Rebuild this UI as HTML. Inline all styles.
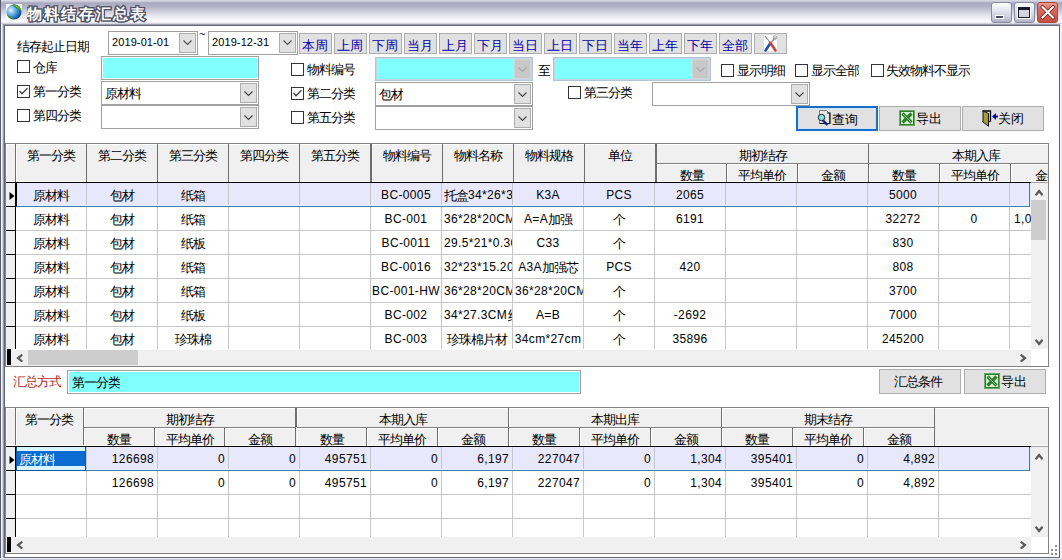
<!DOCTYPE html><html><head><meta charset="utf-8"><style>
html,body{margin:0;padding:0;}
body{width:1062px;height:560px;position:relative;overflow:hidden;background:#fff;font-family:"Liberation Sans",sans-serif;font-size:12px;color:#000;}
div{position:absolute;box-sizing:border-box;}
.t{white-space:nowrap;line-height:14px;height:14px;overflow:hidden;letter-spacing:0.35px;}
.c{font-size:13px;letter-spacing:-1px;position:relative;top:1px;}
.btn{background:#e1e1e1;border:1px solid #adadad;}
.cb{width:13px;height:13px;border:1px solid #333;background:#fff;}
.combo{background:#fff;border:1px solid #a0a0a0;}
.dd{background:#e5e5e5;border:1px solid #b4b4b4;}
</style></head><body>
<div style="left:0px;top:0px;width:1062px;height:26px;background:linear-gradient(#dcdce6 0px,#c8c8d8 1.5px,#a8a8c0 3px,#b4b4ca 7px,#cacad9 11px,#e2e2eb 15px,#f4f4f8 19px,#fbfbfd 22px,#d4d4e0 23.5px,#a8a8ba 24.4px,#66667c 25px,#66667c 26px);"></div>
<div style="left:0px;top:0px;width:1px;height:560px;background:#5c5c70;"></div>
<div style="left:1px;top:24px;width:1px;height:536px;background:#f6f6fa;"></div>
<div style="left:2px;top:24px;width:1px;height:536px;background:#d4d4de;"></div>
<div style="left:3px;top:24px;width:1px;height:536px;background:#9c9cac;"></div>
<div style="left:4px;top:25px;width:1px;height:533px;background:#62627a;"></div>
<div style="left:1059px;top:25px;width:1px;height:533px;background:#62627a;"></div>
<div style="left:1060px;top:24px;width:2px;height:536px;background:#f0f0f6;"></div>
<div style="left:5px;top:557px;width:1055px;height:1px;background:#62627a;"></div>
<div style="left:0px;top:558px;width:1062px;height:2px;background:#f0f0f6;"></div>
<div style="left:0px;top:559px;width:1062px;height:1px;background:#c8c8d4;"></div>
<svg style="position:absolute;left:6px;top:4px" width="16" height="16" viewBox="0 0 16 16">
<defs><radialGradient id="gl" cx="0.3" cy="0.38" r="0.8"><stop offset="0" stop-color="#e0f4ff"/><stop offset="0.35" stop-color="#6ab4e8"/><stop offset="0.75" stop-color="#1a64b0"/><stop offset="1" stop-color="#0a3060"/></radialGradient>
<clipPath id="gc"><circle cx="8" cy="8" r="7.6"/></clipPath></defs>
<rect width="16" height="16" fill="#f8f8fa"/>
<circle cx="8" cy="8" r="7.6" fill="url(#gl)"/>
<g clip-path="url(#gc)">
<ellipse cx="12.5" cy="1.5" rx="8" ry="3.6" transform="rotate(32 12.5 1.5)" fill="#3d8a22"/>
<ellipse cx="11.8" cy="2.6" rx="6.5" ry="1.6" transform="rotate(32 11.8 2.6)" fill="#5aa83a"/>
<ellipse cx="2.5" cy="15" rx="7" ry="3" transform="rotate(32 2.5 15)" fill="#3d8a22"/>
</g>
</svg>
<div class="t" style="left:27px;top:4px;font-size:15px;line-height:20px;height:22px;font-weight:bold;color:#505066;letter-spacing:2.2px;-webkit-text-stroke:2.4px #505066;text-shadow:1px 0px 0 #505066,-1px 0px 0 #505066,0px 1px 0 #505066,0px -1px 0 #505066,1px 1px 0 #505066,-1px -1px 0 #505066,1px -1px 0 #505066,-1px 1px 0 #505066;">物料结存汇总表</div>
<div class="t" style="left:27px;top:4px;font-size:15px;line-height:20px;height:22px;font-weight:bold;color:#fff;letter-spacing:2.2px;">物料结存汇总表</div>
<div style="left:991px;top:2px;width:21px;height:21px;background:linear-gradient(#fdfdff,#e4e4ee 40%,#c8c8d8 80%,#b0b0c4);border:1px solid #8a8aa0;border-radius:3px;"></div>
<div style="left:1014px;top:2px;width:21px;height:21px;background:linear-gradient(#fdfdff,#e4e4ee 40%,#c8c8d8 80%,#b0b0c4);border:1px solid #8a8aa0;border-radius:3px;"></div>
<div style="left:1037px;top:2px;width:21px;height:21px;background:linear-gradient(#eea090,#de6a5c 30%,#d45a4c 70%,#c85040);border:1px solid #a84838;border-radius:3px;"></div>
<div style="left:995px;top:15px;width:9px;height:4px;background:#4a4a64;border:1px solid #fff;"></div>
<div style="left:1018px;top:7px;width:12px;height:11px;border:1px solid #1a1a2a;border-top:3px solid #1a1a2a;background:#d4d4e0;outline:1px solid #fff;"></div>
<svg style="position:absolute;left:1037px;top:2px" width="21" height="21" viewBox="0 0 21 21"><path d="M5.5 5 L16 15.5 M16 5 L5.5 15.5" stroke="#5a1010" stroke-width="3.4" stroke-linecap="square"/><path d="M5.5 5 L16 15.5 M16 5 L5.5 15.5" stroke="#fff" stroke-width="2.2" stroke-linecap="square"/></svg>
<div class="t" style="left:17px;top:39px;"><span class="c">结存起止日期</span></div>
<div style="left:108px;top:31px;width:90px;height:24px;background:#fff;border:1px solid #a0a0a0;"></div>
<div style="left:179px;top:33px;width:17px;height:20px;background:#e1e1e1;border:1px solid #acacac;"></div>
<svg style="position:absolute;left:183px;top:40px" width="9" height="6" viewBox="0 0 9 6"><path d="M0.5 0.5 L4.5 4.5 L8.5 0.5" fill="none" stroke="#505050" stroke-width="1.1"/></svg>
<div class="t" style="left:112px;top:35px;font-size:11px;letter-spacing:0.1px;">2019-01-01</div>
<div style="left:208px;top:31px;width:90px;height:24px;background:#fff;border:1px solid #a0a0a0;"></div>
<div style="left:279px;top:33px;width:17px;height:20px;background:#e1e1e1;border:1px solid #acacac;"></div>
<svg style="position:absolute;left:283px;top:40px" width="9" height="6" viewBox="0 0 9 6"><path d="M0.5 0.5 L4.5 4.5 L8.5 0.5" fill="none" stroke="#505050" stroke-width="1.1"/></svg>
<div class="t" style="left:212px;top:35px;font-size:11px;letter-spacing:0.1px;">2019-12-31</div>
<div class="t" style="left:199px;top:27px;font-size:11px;">~</div>
<div class="btn" style="left:299px;top:33px;width:33px;height:21px;"></div>
<div class="t" style="left:299px;top:39px;width:33px;text-align:center;font-size:13px;color:#0000a8;line-height:14px;height:15px;">本周</div>
<div class="btn" style="left:334px;top:33px;width:33px;height:21px;"></div>
<div class="t" style="left:334px;top:39px;width:33px;text-align:center;font-size:13px;color:#0000a8;line-height:14px;height:15px;">上周</div>
<div class="btn" style="left:369px;top:33px;width:33px;height:21px;"></div>
<div class="t" style="left:369px;top:39px;width:33px;text-align:center;font-size:13px;color:#0000a8;line-height:14px;height:15px;">下周</div>
<div class="btn" style="left:404px;top:33px;width:33px;height:21px;"></div>
<div class="t" style="left:404px;top:39px;width:33px;text-align:center;font-size:13px;color:#0000a8;line-height:14px;height:15px;">当月</div>
<div class="btn" style="left:439px;top:33px;width:33px;height:21px;"></div>
<div class="t" style="left:439px;top:39px;width:33px;text-align:center;font-size:13px;color:#0000a8;line-height:14px;height:15px;">上月</div>
<div class="btn" style="left:474px;top:33px;width:33px;height:21px;"></div>
<div class="t" style="left:474px;top:39px;width:33px;text-align:center;font-size:13px;color:#0000a8;line-height:14px;height:15px;">下月</div>
<div class="btn" style="left:509px;top:33px;width:33px;height:21px;"></div>
<div class="t" style="left:509px;top:39px;width:33px;text-align:center;font-size:13px;color:#0000a8;line-height:14px;height:15px;">当日</div>
<div class="btn" style="left:544px;top:33px;width:33px;height:21px;"></div>
<div class="t" style="left:544px;top:39px;width:33px;text-align:center;font-size:13px;color:#0000a8;line-height:14px;height:15px;">上日</div>
<div class="btn" style="left:579px;top:33px;width:33px;height:21px;"></div>
<div class="t" style="left:579px;top:39px;width:33px;text-align:center;font-size:13px;color:#0000a8;line-height:14px;height:15px;">下日</div>
<div class="btn" style="left:614px;top:33px;width:33px;height:21px;"></div>
<div class="t" style="left:614px;top:39px;width:33px;text-align:center;font-size:13px;color:#0000a8;line-height:14px;height:15px;">当年</div>
<div class="btn" style="left:649px;top:33px;width:33px;height:21px;"></div>
<div class="t" style="left:649px;top:39px;width:33px;text-align:center;font-size:13px;color:#0000a8;line-height:14px;height:15px;">上年</div>
<div class="btn" style="left:684px;top:33px;width:33px;height:21px;"></div>
<div class="t" style="left:684px;top:39px;width:33px;text-align:center;font-size:13px;color:#0000a8;line-height:14px;height:15px;">下年</div>
<div class="btn" style="left:719px;top:33px;width:33px;height:21px;"></div>
<div class="t" style="left:719px;top:39px;width:33px;text-align:center;font-size:13px;color:#0000a8;line-height:14px;height:15px;">全部</div>
<div class="btn" style="left:754px;top:33px;width:33px;height:21px;"></div>
<svg style="position:absolute;left:763px;top:35px" width="15" height="17" viewBox="0 0 15 17">
<rect x="1" y="0" width="13" height="16" fill="#fff"/>
<path d="M2 1 L7.5 8" stroke="#888" stroke-width="1.2"/>
<path d="M7.5 8 L2.5 15.5" stroke="#1f4fb0" stroke-width="2.6" stroke-linecap="round"/>
<path d="M12.5 2.5 L7.5 8" stroke="#999" stroke-width="1.6"/>
<circle cx="12" cy="2.5" r="1.8" fill="none" stroke="#999" stroke-width="1"/>
<path d="M7.5 8 L12.5 15.5" stroke="#d04040" stroke-width="2.6" stroke-linecap="round"/>
</svg>
<div class="cb" style="left:17px;top:60px;width:13px;height:13px;"></div>
<div class="t" style="left:33px;top:60px;"><span class="c">仓库</span></div>
<div style="left:101px;top:56px;width:158px;height:24px;background:#80ffff;border:1px solid #a0a0a0;box-shadow:inset 0 0 0 1px #fff;"></div>
<div class="cb" style="left:17px;top:85px;width:13px;height:13px;"></div>
<svg style="position:absolute;left:17px;top:85px" width="13" height="13" viewBox="0 0 13 13"><path d="M2.5 6 L5 8.8 L10.5 3.2" fill="none" stroke="#444" stroke-width="1.3"/></svg>
<div class="t" style="left:33px;top:84px;"><span class="c">第一分类</span></div>
<div style="left:101px;top:81px;width:158px;height:24px;background:#fff;border:1px solid #a0a0a0;"></div>
<div style="left:240px;top:83px;width:17px;height:20px;background:#e1e1e1;border:1px solid #acacac;"></div>
<svg style="position:absolute;left:244px;top:91px" width="9" height="6" viewBox="0 0 9 6"><path d="M0.5 0.5 L4.5 4.5 L8.5 0.5" fill="none" stroke="#444" stroke-width="1.1"/></svg>
<div class="t" style="left:105px;top:86px;"><span class="c">原材料</span></div>
<div class="cb" style="left:17px;top:109px;width:13px;height:13px;"></div>
<div class="t" style="left:33px;top:108px;"><span class="c">第四分类</span></div>
<div style="left:101px;top:105px;width:158px;height:24px;background:#fff;border:1px solid #a0a0a0;"></div>
<div style="left:240px;top:107px;width:17px;height:20px;background:#e1e1e1;border:1px solid #acacac;"></div>
<svg style="position:absolute;left:244px;top:115px" width="9" height="6" viewBox="0 0 9 6"><path d="M0.5 0.5 L4.5 4.5 L8.5 0.5" fill="none" stroke="#444" stroke-width="1.1"/></svg>
<div class="cb" style="left:291px;top:63px;width:13px;height:13px;"></div>
<div class="t" style="left:307px;top:62px;"><span class="c">物料编号</span></div>
<div style="left:375px;top:57px;width:158px;height:24px;background:#80ffff;border:1px solid #b4c4d8;box-shadow:inset 0 0 0 1px #c8d4e4;"></div>
<div style="left:514px;top:59px;width:17px;height:20px;background:#c8c8c8;border:1px solid #d4d4d4;"></div>
<svg style="position:absolute;left:518px;top:67px" width="9" height="6" viewBox="0 0 9 6"><path d="M0.5 0.5 L4.5 4.5 L8.5 0.5" fill="none" stroke="#a8a8a8" stroke-width="1.1"/></svg>
<div class="t" style="left:538px;top:63px;"><span class="c">至</span></div>
<div style="left:553px;top:57px;width:158px;height:24px;background:#80ffff;border:1px solid #b4c4d8;box-shadow:inset 0 0 0 1px #c8d4e4;"></div>
<div style="left:692px;top:59px;width:17px;height:20px;background:#c8c8c8;border:1px solid #d4d4d4;"></div>
<svg style="position:absolute;left:696px;top:67px" width="9" height="6" viewBox="0 0 9 6"><path d="M0.5 0.5 L4.5 4.5 L8.5 0.5" fill="none" stroke="#a8a8a8" stroke-width="1.1"/></svg>
<div class="cb" style="left:291px;top:87px;width:13px;height:13px;"></div>
<svg style="position:absolute;left:291px;top:87px" width="13" height="13" viewBox="0 0 13 13"><path d="M2.5 6 L5 8.8 L10.5 3.2" fill="none" stroke="#444" stroke-width="1.3"/></svg>
<div class="t" style="left:307px;top:86px;"><span class="c">第二分类</span></div>
<div style="left:375px;top:82px;width:158px;height:24px;background:#fff;border:1px solid #a0a0a0;"></div>
<div style="left:514px;top:84px;width:17px;height:20px;background:#e1e1e1;border:1px solid #acacac;"></div>
<svg style="position:absolute;left:518px;top:92px" width="9" height="6" viewBox="0 0 9 6"><path d="M0.5 0.5 L4.5 4.5 L8.5 0.5" fill="none" stroke="#444" stroke-width="1.1"/></svg>
<div class="t" style="left:379px;top:87px;"><span class="c">包材</span></div>
<div class="cb" style="left:291px;top:111px;width:13px;height:13px;"></div>
<div class="t" style="left:307px;top:110px;"><span class="c">第五分类</span></div>
<div style="left:375px;top:106px;width:158px;height:24px;background:#fff;border:1px solid #a0a0a0;"></div>
<div style="left:514px;top:108px;width:17px;height:20px;background:#e1e1e1;border:1px solid #acacac;"></div>
<svg style="position:absolute;left:518px;top:116px" width="9" height="6" viewBox="0 0 9 6"><path d="M0.5 0.5 L4.5 4.5 L8.5 0.5" fill="none" stroke="#444" stroke-width="1.1"/></svg>
<div class="cb" style="left:568px;top:86px;width:13px;height:13px;"></div>
<div class="t" style="left:584px;top:85px;"><span class="c">第三分类</span></div>
<div style="left:652px;top:82px;width:158px;height:24px;background:#fff;border:1px solid #a0a0a0;"></div>
<div style="left:791px;top:84px;width:17px;height:20px;background:#e1e1e1;border:1px solid #acacac;"></div>
<svg style="position:absolute;left:795px;top:92px" width="9" height="6" viewBox="0 0 9 6"><path d="M0.5 0.5 L4.5 4.5 L8.5 0.5" fill="none" stroke="#444" stroke-width="1.1"/></svg>
<div class="cb" style="left:721px;top:64px;width:13px;height:13px;"></div>
<div class="t" style="left:737px;top:63px;"><span class="c">显示明细</span></div>
<div class="cb" style="left:795px;top:64px;width:13px;height:13px;"></div>
<div class="t" style="left:811px;top:63px;"><span class="c">显示全部</span></div>
<div class="cb" style="left:871px;top:64px;width:13px;height:13px;"></div>
<div class="t" style="left:886px;top:63px;"><span class="c">失效物料不显示</span></div>
<div style="left:796px;top:106px;width:82px;height:25px;background:#e1e1e1;border:2px solid #1a6ec8;box-shadow:inset 0 0 0 1px #cce4f7;"></div>
<svg style="position:absolute;left:817px;top:110px" width="16" height="16" viewBox="0 0 16 16">
<path d="M2.5 0.5 H9.5 L12.5 3.5 V13.5 H2.5 Z" fill="#e6e6e6" stroke="#808080" stroke-width="1"/>
<path d="M10 3 H13 V13.5 H2.5" fill="none" stroke="#111" stroke-width="1.2"/>
<path d="M5.5 10 L10.5 15" stroke="#0a1a90" stroke-width="2.4"/>
<circle cx="4.5" cy="7.5" r="3.2" fill="#88e0e8" stroke="#222" stroke-width="1"/>
</svg>
<div class="t" style="left:832px;top:113px;font-size:13px;line-height:14px;">查询</div>
<div class="btn" style="left:879px;top:106px;width:82px;height:25px;"></div>
<svg style="position:absolute;left:899px;top:110px" width="16" height="16" viewBox="0 0 16 16">
<rect x="0" y="0" width="16" height="16" fill="#2f7a2f"/>
<rect x="0.5" y="0.5" width="15" height="15" fill="none" stroke="#a8d8a8" stroke-width="1" stroke-dasharray="1 1"/>
<rect x="2" y="2" width="12" height="12" fill="#d4f6d4"/>
<path d="M3.5 3.5 L12.5 12.5 M12.5 3.5 L3.5 12.5" stroke="#2e7e2e" stroke-width="3.2"/>
<path d="M4 4 L12 12" stroke="#b8e8b8" stroke-width="0.7"/>
</svg>
<div class="t" style="left:916px;top:112px;font-size:13px;line-height:14px;">导出</div>
<div class="btn" style="left:962px;top:106px;width:82px;height:25px;"></div>
<svg style="position:absolute;left:982px;top:110px" width="17" height="17" viewBox="0 0 17 17">
<path d="M0.5 1 H8.5 V11.5" fill="none" stroke="#000" stroke-width="1.3"/>
<path d="M0 11.5 H8.5" stroke="#000" stroke-width="1.2"/>
<path d="M1 1 L6.5 3.5 V16.2 L1 12 Z" fill="#a89c30" stroke="#111" stroke-width="1"/>
<path d="M10 6.5 L14 3 V10 Z" fill="#0a0a9a"/>
<rect x="13.5" y="5.5" width="2.5" height="2" fill="#0a0a9a"/>
</svg>
<div class="t" style="left:998px;top:112px;font-size:13px;line-height:14px;">关闭</div>
<div style="left:5px;top:143px;width:1044px;height:224px;background:#fff;border:1px solid #828282;"></div>
<div style="left:0;top:0;width:1048px;height:560px;overflow:hidden;">
<div style="left:6px;top:144px;width:1042px;height:38px;background:#f0f0f0;"></div>
<div style="left:6px;top:144px;width:9px;height:38px;background:#f0f0f0;border-top:1px solid #fff;border-left:1px solid #fff;"></div>
<div style="left:6px;top:181px;width:1042px;height:1px;background:#fff;"></div>
<div style="left:15px;top:144px;width:1px;height:38px;background:#6e6e6e;"></div>
<div style="left:16px;top:144px;width:1px;height:38px;background:#fff;"></div>
<div style="left:16px;top:144px;width:70px;height:1px;background:#fff;"></div>
<div class="t" style="left:16px;top:148px;width:70px;text-align:center;"><span class="c">第一分类</span></div>
<div style="left:86px;top:144px;width:1px;height:38px;background:#6e6e6e;"></div>
<div style="left:87px;top:144px;width:70px;height:1px;background:#fff;"></div>
<div class="t" style="left:87px;top:148px;width:70px;text-align:center;"><span class="c">第二分类</span></div>
<div style="left:157px;top:144px;width:1px;height:38px;background:#6e6e6e;"></div>
<div style="left:158px;top:144px;width:70px;height:1px;background:#fff;"></div>
<div class="t" style="left:158px;top:148px;width:70px;text-align:center;"><span class="c">第三分类</span></div>
<div style="left:228px;top:144px;width:1px;height:38px;background:#6e6e6e;"></div>
<div style="left:229px;top:144px;width:70px;height:1px;background:#fff;"></div>
<div class="t" style="left:229px;top:148px;width:70px;text-align:center;"><span class="c">第四分类</span></div>
<div style="left:299px;top:144px;width:1px;height:38px;background:#6e6e6e;"></div>
<div style="left:300px;top:144px;width:70px;height:1px;background:#fff;"></div>
<div class="t" style="left:300px;top:148px;width:70px;text-align:center;"><span class="c">第五分类</span></div>
<div style="left:370px;top:144px;width:1px;height:38px;background:#6e6e6e;"></div>
<div style="left:372px;top:144px;width:70px;height:1px;background:#fff;"></div>
<div class="t" style="left:372px;top:148px;width:70px;text-align:center;"><span class="c">物料编号</span></div>
<div style="left:442px;top:144px;width:1px;height:38px;background:#6e6e6e;"></div>
<div style="left:443px;top:144px;width:70px;height:1px;background:#fff;"></div>
<div class="t" style="left:443px;top:148px;width:70px;text-align:center;"><span class="c">物料名称</span></div>
<div style="left:513px;top:144px;width:1px;height:38px;background:#6e6e6e;"></div>
<div style="left:514px;top:144px;width:70px;height:1px;background:#fff;"></div>
<div class="t" style="left:514px;top:148px;width:70px;text-align:center;"><span class="c">物料规格</span></div>
<div style="left:584px;top:144px;width:1px;height:38px;background:#6e6e6e;"></div>
<div style="left:585px;top:144px;width:70px;height:1px;background:#fff;"></div>
<div class="t" style="left:585px;top:148px;width:70px;text-align:center;"><span class="c">单位</span></div>
<div style="left:655px;top:144px;width:1px;height:38px;background:#6e6e6e;"></div>
<div style="left:371px;top:144px;width:1px;height:38px;background:#6e6e6e;"></div>
<div style="left:656px;top:144px;width:1px;height:38px;background:#6e6e6e;"></div>
<div style="left:657px;top:144px;width:211px;height:1px;background:#fff;"></div>
<div class="t" style="left:657px;top:148px;width:211px;text-align:center;"><span class="c">期初结存</span></div>
<div style="left:657px;top:163px;width:211px;height:1px;background:#808080;"></div>
<div style="left:657px;top:164px;width:211px;height:1px;background:#fff;"></div>
<div class="t" style="left:657px;top:168px;width:69px;text-align:center;height:13px;"><span class="c">数量</span></div>
<div style="left:726px;top:164px;width:1px;height:18px;background:#6e6e6e;"></div>
<div style="left:657px;top:164px;width:1px;height:18px;background:#fff;"></div>
<div class="t" style="left:727px;top:168px;width:70px;text-align:center;height:13px;"><span class="c">平均单价</span></div>
<div style="left:797px;top:164px;width:1px;height:18px;background:#6e6e6e;"></div>
<div style="left:727px;top:164px;width:1px;height:18px;background:#fff;"></div>
<div class="t" style="left:798px;top:168px;width:70px;text-align:center;height:13px;"><span class="c">金额</span></div>
<div style="left:868px;top:164px;width:1px;height:18px;background:#6e6e6e;"></div>
<div style="left:798px;top:164px;width:1px;height:18px;background:#fff;"></div>
<div style="left:868px;top:144px;width:1px;height:38px;background:#6e6e6e;"></div>
<div style="left:869px;top:144px;width:213px;height:1px;background:#fff;"></div>
<div class="t" style="left:869px;top:148px;width:213px;text-align:center;"><span class="c">本期入库</span></div>
<div style="left:869px;top:163px;width:213px;height:1px;background:#808080;"></div>
<div style="left:869px;top:164px;width:213px;height:1px;background:#fff;"></div>
<div class="t" style="left:869px;top:168px;width:70px;text-align:center;height:13px;"><span class="c">数量</span></div>
<div style="left:939px;top:164px;width:1px;height:18px;background:#6e6e6e;"></div>
<div style="left:869px;top:164px;width:1px;height:18px;background:#fff;"></div>
<div class="t" style="left:940px;top:168px;width:70px;text-align:center;height:13px;"><span class="c">平均单价</span></div>
<div style="left:1010px;top:164px;width:1px;height:18px;background:#6e6e6e;"></div>
<div style="left:940px;top:164px;width:1px;height:18px;background:#fff;"></div>
<div class="t" style="left:1011px;top:168px;width:71px;text-align:center;height:13px;"><span class="c">金额</span></div>
<div style="left:1011px;top:164px;width:1px;height:18px;background:#fff;"></div>
<div style="left:6px;top:182px;width:1025px;height:1px;background:#000;"></div>
<div style="left:1031px;top:182px;width:17px;height:1px;background:#a0a0a0;"></div>
</div>
<div style="left:6px;top:183px;width:1025px;height:166px;overflow:hidden;">
<div style="left:10px;top:0px;width:1015px;height:24px;background:#e8e8fc;"></div>
<div style="left:0px;top:0px;width:9px;height:24px;background:#f0f0f0;"></div>
<div style="left:0px;top:23px;width:9px;height:1px;background:#000;"></div>
<div style="left:9px;top:0px;width:1px;height:24px;background:#000;"></div>
<div class="t" style="left:7px;top:5px;width:76px;text-align:center;"><span class="c">原材料</span></div>
<div style="left:80px;top:0px;width:1px;height:24px;background:#c6c6c6;"></div>
<div class="t" style="left:78px;top:5px;width:76px;text-align:center;"><span class="c">包材</span></div>
<div style="left:151px;top:0px;width:1px;height:24px;background:#c6c6c6;"></div>
<div class="t" style="left:149px;top:5px;width:76px;text-align:center;"><span class="c">纸箱</span></div>
<div style="left:222px;top:0px;width:1px;height:24px;background:#c6c6c6;"></div>
<div style="left:293px;top:0px;width:1px;height:24px;background:#c6c6c6;"></div>
<div style="left:364px;top:0px;width:1px;height:24px;background:#c6c6c6;"></div>
<div class="t" style="left:362px;top:5px;width:76px;text-align:center;">BC-0005</div>
<div style="left:435px;top:0px;width:1px;height:24px;background:#c6c6c6;"></div>
<div class="t" style="left:438px;top:5px;width:68px;"><span class="c">托盒</span>34*26*30</div>
<div style="left:506px;top:0px;width:1px;height:24px;background:#c6c6c6;"></div>
<div class="t" style="left:504px;top:5px;width:76px;text-align:center;">K3A</div>
<div style="left:577px;top:0px;width:1px;height:24px;background:#c6c6c6;"></div>
<div class="t" style="left:575px;top:5px;width:76px;text-align:center;">PCS</div>
<div style="left:648px;top:0px;width:1px;height:24px;background:#c6c6c6;"></div>
<div class="t" style="left:646px;top:5px;width:76px;text-align:center;">2065</div>
<div style="left:719px;top:0px;width:1px;height:24px;background:#c6c6c6;"></div>
<div style="left:790px;top:0px;width:1px;height:24px;background:#c6c6c6;"></div>
<div style="left:861px;top:0px;width:1px;height:24px;background:#c6c6c6;"></div>
<div class="t" style="left:859px;top:5px;width:76px;text-align:center;">5000</div>
<div style="left:932px;top:0px;width:1px;height:24px;background:#c6c6c6;"></div>
<div style="left:1003px;top:0px;width:1px;height:24px;background:#c6c6c6;"></div>
<div style="left:1074px;top:0px;width:1px;height:24px;background:#c6c6c6;"></div>
<div style="left:0px;top:24px;width:9px;height:24px;background:#f0f0f0;"></div>
<div style="left:0px;top:47px;width:9px;height:1px;background:#000;"></div>
<div style="left:9px;top:24px;width:1px;height:24px;background:#000;"></div>
<div class="t" style="left:7px;top:29px;width:76px;text-align:center;"><span class="c">原材料</span></div>
<div style="left:80px;top:24px;width:1px;height:24px;background:#c6c6c6;"></div>
<div class="t" style="left:78px;top:29px;width:76px;text-align:center;"><span class="c">包材</span></div>
<div style="left:151px;top:24px;width:1px;height:24px;background:#c6c6c6;"></div>
<div class="t" style="left:149px;top:29px;width:76px;text-align:center;"><span class="c">纸箱</span></div>
<div style="left:222px;top:24px;width:1px;height:24px;background:#c6c6c6;"></div>
<div style="left:293px;top:24px;width:1px;height:24px;background:#c6c6c6;"></div>
<div style="left:364px;top:24px;width:1px;height:24px;background:#c6c6c6;"></div>
<div class="t" style="left:362px;top:29px;width:76px;text-align:center;">BC-001</div>
<div style="left:435px;top:24px;width:1px;height:24px;background:#c6c6c6;"></div>
<div class="t" style="left:438px;top:29px;width:68px;">36*28*20CM<span class="c">纸</span></div>
<div style="left:506px;top:24px;width:1px;height:24px;background:#c6c6c6;"></div>
<div class="t" style="left:504px;top:29px;width:76px;text-align:center;">A=A<span class="c">加强</span></div>
<div style="left:577px;top:24px;width:1px;height:24px;background:#c6c6c6;"></div>
<div class="t" style="left:575px;top:29px;width:76px;text-align:center;"><span class="c">个</span></div>
<div style="left:648px;top:24px;width:1px;height:24px;background:#c6c6c6;"></div>
<div class="t" style="left:646px;top:29px;width:76px;text-align:center;">6191</div>
<div style="left:719px;top:24px;width:1px;height:24px;background:#c6c6c6;"></div>
<div style="left:790px;top:24px;width:1px;height:24px;background:#c6c6c6;"></div>
<div style="left:861px;top:24px;width:1px;height:24px;background:#c6c6c6;"></div>
<div class="t" style="left:859px;top:29px;width:76px;text-align:center;">32272</div>
<div style="left:932px;top:24px;width:1px;height:24px;background:#c6c6c6;"></div>
<div class="t" style="left:930px;top:29px;width:76px;text-align:center;">0</div>
<div style="left:1003px;top:24px;width:1px;height:24px;background:#c6c6c6;"></div>
<div class="t" style="left:1008px;top:29px;width:66px;">1,0</div>
<div style="left:1074px;top:24px;width:1px;height:24px;background:#c6c6c6;"></div>
<div style="left:10px;top:47px;width:1015px;height:1px;background:#c6c6c6;"></div>
<div style="left:0px;top:48px;width:9px;height:24px;background:#f0f0f0;"></div>
<div style="left:0px;top:71px;width:9px;height:1px;background:#000;"></div>
<div style="left:9px;top:48px;width:1px;height:24px;background:#000;"></div>
<div class="t" style="left:7px;top:53px;width:76px;text-align:center;"><span class="c">原材料</span></div>
<div style="left:80px;top:48px;width:1px;height:24px;background:#c6c6c6;"></div>
<div class="t" style="left:78px;top:53px;width:76px;text-align:center;"><span class="c">包材</span></div>
<div style="left:151px;top:48px;width:1px;height:24px;background:#c6c6c6;"></div>
<div class="t" style="left:149px;top:53px;width:76px;text-align:center;"><span class="c">纸板</span></div>
<div style="left:222px;top:48px;width:1px;height:24px;background:#c6c6c6;"></div>
<div style="left:293px;top:48px;width:1px;height:24px;background:#c6c6c6;"></div>
<div style="left:364px;top:48px;width:1px;height:24px;background:#c6c6c6;"></div>
<div class="t" style="left:362px;top:53px;width:76px;text-align:center;">BC-0011</div>
<div style="left:435px;top:48px;width:1px;height:24px;background:#c6c6c6;"></div>
<div class="t" style="left:438px;top:53px;width:68px;">29.5*21*0.30</div>
<div style="left:506px;top:48px;width:1px;height:24px;background:#c6c6c6;"></div>
<div class="t" style="left:504px;top:53px;width:76px;text-align:center;">C33</div>
<div style="left:577px;top:48px;width:1px;height:24px;background:#c6c6c6;"></div>
<div class="t" style="left:575px;top:53px;width:76px;text-align:center;"><span class="c">个</span></div>
<div style="left:648px;top:48px;width:1px;height:24px;background:#c6c6c6;"></div>
<div style="left:719px;top:48px;width:1px;height:24px;background:#c6c6c6;"></div>
<div style="left:790px;top:48px;width:1px;height:24px;background:#c6c6c6;"></div>
<div style="left:861px;top:48px;width:1px;height:24px;background:#c6c6c6;"></div>
<div class="t" style="left:859px;top:53px;width:76px;text-align:center;">830</div>
<div style="left:932px;top:48px;width:1px;height:24px;background:#c6c6c6;"></div>
<div style="left:1003px;top:48px;width:1px;height:24px;background:#c6c6c6;"></div>
<div style="left:1074px;top:48px;width:1px;height:24px;background:#c6c6c6;"></div>
<div style="left:10px;top:71px;width:1015px;height:1px;background:#c6c6c6;"></div>
<div style="left:0px;top:72px;width:9px;height:24px;background:#f0f0f0;"></div>
<div style="left:0px;top:95px;width:9px;height:1px;background:#000;"></div>
<div style="left:9px;top:72px;width:1px;height:24px;background:#000;"></div>
<div class="t" style="left:7px;top:77px;width:76px;text-align:center;"><span class="c">原材料</span></div>
<div style="left:80px;top:72px;width:1px;height:24px;background:#c6c6c6;"></div>
<div class="t" style="left:78px;top:77px;width:76px;text-align:center;"><span class="c">包材</span></div>
<div style="left:151px;top:72px;width:1px;height:24px;background:#c6c6c6;"></div>
<div class="t" style="left:149px;top:77px;width:76px;text-align:center;"><span class="c">纸箱</span></div>
<div style="left:222px;top:72px;width:1px;height:24px;background:#c6c6c6;"></div>
<div style="left:293px;top:72px;width:1px;height:24px;background:#c6c6c6;"></div>
<div style="left:364px;top:72px;width:1px;height:24px;background:#c6c6c6;"></div>
<div class="t" style="left:362px;top:77px;width:76px;text-align:center;">BC-0016</div>
<div style="left:435px;top:72px;width:1px;height:24px;background:#c6c6c6;"></div>
<div class="t" style="left:438px;top:77px;width:68px;">32*23*15.20<span class="c">纸</span></div>
<div style="left:506px;top:72px;width:1px;height:24px;background:#c6c6c6;"></div>
<div class="t" style="left:504px;top:77px;width:76px;text-align:center;">A3A<span class="c">加强芯</span></div>
<div style="left:577px;top:72px;width:1px;height:24px;background:#c6c6c6;"></div>
<div class="t" style="left:575px;top:77px;width:76px;text-align:center;">PCS</div>
<div style="left:648px;top:72px;width:1px;height:24px;background:#c6c6c6;"></div>
<div class="t" style="left:646px;top:77px;width:76px;text-align:center;">420</div>
<div style="left:719px;top:72px;width:1px;height:24px;background:#c6c6c6;"></div>
<div style="left:790px;top:72px;width:1px;height:24px;background:#c6c6c6;"></div>
<div style="left:861px;top:72px;width:1px;height:24px;background:#c6c6c6;"></div>
<div class="t" style="left:859px;top:77px;width:76px;text-align:center;">808</div>
<div style="left:932px;top:72px;width:1px;height:24px;background:#c6c6c6;"></div>
<div style="left:1003px;top:72px;width:1px;height:24px;background:#c6c6c6;"></div>
<div style="left:1074px;top:72px;width:1px;height:24px;background:#c6c6c6;"></div>
<div style="left:10px;top:95px;width:1015px;height:1px;background:#c6c6c6;"></div>
<div style="left:0px;top:96px;width:9px;height:24px;background:#f0f0f0;"></div>
<div style="left:0px;top:119px;width:9px;height:1px;background:#000;"></div>
<div style="left:9px;top:96px;width:1px;height:24px;background:#000;"></div>
<div class="t" style="left:7px;top:101px;width:76px;text-align:center;"><span class="c">原材料</span></div>
<div style="left:80px;top:96px;width:1px;height:24px;background:#c6c6c6;"></div>
<div class="t" style="left:78px;top:101px;width:76px;text-align:center;"><span class="c">包材</span></div>
<div style="left:151px;top:96px;width:1px;height:24px;background:#c6c6c6;"></div>
<div class="t" style="left:149px;top:101px;width:76px;text-align:center;"><span class="c">纸箱</span></div>
<div style="left:222px;top:96px;width:1px;height:24px;background:#c6c6c6;"></div>
<div style="left:293px;top:96px;width:1px;height:24px;background:#c6c6c6;"></div>
<div style="left:364px;top:96px;width:1px;height:24px;background:#c6c6c6;"></div>
<div class="t" style="left:362px;top:101px;width:76px;text-align:center;">BC-001-HW</div>
<div style="left:435px;top:96px;width:1px;height:24px;background:#c6c6c6;"></div>
<div class="t" style="left:438px;top:101px;width:68px;">36*28*20CM<span class="c">纸</span></div>
<div style="left:506px;top:96px;width:1px;height:24px;background:#c6c6c6;"></div>
<div class="t" style="left:509px;top:101px;width:68px;">36*28*20CM<span class="c">纸</span></div>
<div style="left:577px;top:96px;width:1px;height:24px;background:#c6c6c6;"></div>
<div class="t" style="left:575px;top:101px;width:76px;text-align:center;"><span class="c">个</span></div>
<div style="left:648px;top:96px;width:1px;height:24px;background:#c6c6c6;"></div>
<div style="left:719px;top:96px;width:1px;height:24px;background:#c6c6c6;"></div>
<div style="left:790px;top:96px;width:1px;height:24px;background:#c6c6c6;"></div>
<div style="left:861px;top:96px;width:1px;height:24px;background:#c6c6c6;"></div>
<div class="t" style="left:859px;top:101px;width:76px;text-align:center;">3700</div>
<div style="left:932px;top:96px;width:1px;height:24px;background:#c6c6c6;"></div>
<div style="left:1003px;top:96px;width:1px;height:24px;background:#c6c6c6;"></div>
<div style="left:1074px;top:96px;width:1px;height:24px;background:#c6c6c6;"></div>
<div style="left:10px;top:119px;width:1015px;height:1px;background:#c6c6c6;"></div>
<div style="left:0px;top:120px;width:9px;height:24px;background:#f0f0f0;"></div>
<div style="left:0px;top:143px;width:9px;height:1px;background:#000;"></div>
<div style="left:9px;top:120px;width:1px;height:24px;background:#000;"></div>
<div class="t" style="left:7px;top:125px;width:76px;text-align:center;"><span class="c">原材料</span></div>
<div style="left:80px;top:120px;width:1px;height:24px;background:#c6c6c6;"></div>
<div class="t" style="left:78px;top:125px;width:76px;text-align:center;"><span class="c">包材</span></div>
<div style="left:151px;top:120px;width:1px;height:24px;background:#c6c6c6;"></div>
<div class="t" style="left:149px;top:125px;width:76px;text-align:center;"><span class="c">纸板</span></div>
<div style="left:222px;top:120px;width:1px;height:24px;background:#c6c6c6;"></div>
<div style="left:293px;top:120px;width:1px;height:24px;background:#c6c6c6;"></div>
<div style="left:364px;top:120px;width:1px;height:24px;background:#c6c6c6;"></div>
<div class="t" style="left:362px;top:125px;width:76px;text-align:center;">BC-002</div>
<div style="left:435px;top:120px;width:1px;height:24px;background:#c6c6c6;"></div>
<div class="t" style="left:438px;top:125px;width:68px;">34*27.3CM<span class="c">纟</span></div>
<div style="left:506px;top:120px;width:1px;height:24px;background:#c6c6c6;"></div>
<div class="t" style="left:504px;top:125px;width:76px;text-align:center;">A=B</div>
<div style="left:577px;top:120px;width:1px;height:24px;background:#c6c6c6;"></div>
<div class="t" style="left:575px;top:125px;width:76px;text-align:center;"><span class="c">个</span></div>
<div style="left:648px;top:120px;width:1px;height:24px;background:#c6c6c6;"></div>
<div class="t" style="left:646px;top:125px;width:76px;text-align:center;">-2692</div>
<div style="left:719px;top:120px;width:1px;height:24px;background:#c6c6c6;"></div>
<div style="left:790px;top:120px;width:1px;height:24px;background:#c6c6c6;"></div>
<div style="left:861px;top:120px;width:1px;height:24px;background:#c6c6c6;"></div>
<div class="t" style="left:859px;top:125px;width:76px;text-align:center;">7000</div>
<div style="left:932px;top:120px;width:1px;height:24px;background:#c6c6c6;"></div>
<div style="left:1003px;top:120px;width:1px;height:24px;background:#c6c6c6;"></div>
<div style="left:1074px;top:120px;width:1px;height:24px;background:#c6c6c6;"></div>
<div style="left:10px;top:143px;width:1015px;height:1px;background:#c6c6c6;"></div>
<div style="left:0px;top:144px;width:9px;height:24px;background:#f0f0f0;"></div>
<div style="left:0px;top:167px;width:9px;height:1px;background:#000;"></div>
<div style="left:9px;top:144px;width:1px;height:24px;background:#000;"></div>
<div class="t" style="left:7px;top:149px;width:76px;text-align:center;"><span class="c">原材料</span></div>
<div style="left:80px;top:144px;width:1px;height:24px;background:#c6c6c6;"></div>
<div class="t" style="left:78px;top:149px;width:76px;text-align:center;"><span class="c">包材</span></div>
<div style="left:151px;top:144px;width:1px;height:24px;background:#c6c6c6;"></div>
<div class="t" style="left:149px;top:149px;width:76px;text-align:center;"><span class="c">珍珠棉</span></div>
<div style="left:222px;top:144px;width:1px;height:24px;background:#c6c6c6;"></div>
<div style="left:293px;top:144px;width:1px;height:24px;background:#c6c6c6;"></div>
<div style="left:364px;top:144px;width:1px;height:24px;background:#c6c6c6;"></div>
<div class="t" style="left:362px;top:149px;width:76px;text-align:center;">BC-003</div>
<div style="left:435px;top:144px;width:1px;height:24px;background:#c6c6c6;"></div>
<div class="t" style="left:433px;top:149px;width:76px;text-align:center;"><span class="c">珍珠棉片材</span></div>
<div style="left:506px;top:144px;width:1px;height:24px;background:#c6c6c6;"></div>
<div class="t" style="left:504px;top:149px;width:76px;text-align:center;">34cm*27cm</div>
<div style="left:577px;top:144px;width:1px;height:24px;background:#c6c6c6;"></div>
<div class="t" style="left:575px;top:149px;width:76px;text-align:center;"><span class="c">个</span></div>
<div style="left:648px;top:144px;width:1px;height:24px;background:#c6c6c6;"></div>
<div class="t" style="left:646px;top:149px;width:76px;text-align:center;">35896</div>
<div style="left:719px;top:144px;width:1px;height:24px;background:#c6c6c6;"></div>
<div style="left:790px;top:144px;width:1px;height:24px;background:#c6c6c6;"></div>
<div style="left:861px;top:144px;width:1px;height:24px;background:#c6c6c6;"></div>
<div class="t" style="left:859px;top:149px;width:76px;text-align:center;">245200</div>
<div style="left:932px;top:144px;width:1px;height:24px;background:#c6c6c6;"></div>
<div style="left:1003px;top:144px;width:1px;height:24px;background:#c6c6c6;"></div>
<div style="left:1074px;top:144px;width:1px;height:24px;background:#c6c6c6;"></div>
<div style="left:10px;top:167px;width:1015px;height:1px;background:#c6c6c6;"></div>
<div style="left:10px;top:0px;width:1014px;height:24px;border:1px solid #4a7aa8;border-top:none;border-left:1px solid #000;box-shadow:inset -1px -1px 0 #d8f4ff;"></div>
<svg style="position:absolute;left:3px;top:9px" width="6" height="8" viewBox="0 0 6 8"><path d="M0.5 0 L5.5 4 L0.5 8 Z" fill="#000"/></svg>
</div>
<div style="left:6px;top:349px;width:1025px;height:17px;background:#f0f0f0;"></div>
<div style="left:7px;top:349px;width:4px;height:16px;background:#000;"></div>
<div style="left:11px;top:349px;width:1020px;height:1px;background:#fff;"></div>
<div style="left:28px;top:350px;width:110px;height:15px;background:#cdcdcd;"></div>
<svg style="position:absolute;left:16px;top:354px" width="8" height="8" viewBox="0 0 7 7"><path d="M5.5 0.6 L1.8 3.6 L5.5 6.6" fill="none" stroke="#5a5a5a" stroke-width="2"/></svg>
<svg style="position:absolute;left:1019px;top:354px" width="8" height="8" viewBox="0 0 7 7"><path d="M1.5 0.6 L5.2 3.6 L1.5 6.6" fill="none" stroke="#5a5a5a" stroke-width="2"/></svg>
<div style="left:1031px;top:183px;width:17px;height:166px;background:#f0f0f0;"></div>
<div style="left:1031px;top:200px;width:15px;height:40px;background:#cdcdcd;"></div>
<svg style="position:absolute;left:1035px;top:189px" width="8" height="8" viewBox="0 0 7 7"><path d="M0.6 5.5 L3.6 1.8 L6.6 5.5" fill="none" stroke="#5a5a5a" stroke-width="2"/></svg>
<svg style="position:absolute;left:1035px;top:338px" width="8" height="8" viewBox="0 0 7 7"><path d="M0.6 1.5 L3.6 5.2 L6.6 1.5" fill="none" stroke="#5a5a5a" stroke-width="2"/></svg>
<div style="left:1031px;top:349px;width:17px;height:17px;background:#fff;"></div>
<div class="t" style="left:13px;top:374px;color:#b41c1c;"><span class="c">汇总方式</span></div>
<div style="left:67px;top:370px;width:514px;height:24px;background:#80ffff;border:1px solid #a0a0a0;box-shadow:inset 0 0 0 1px #fff;"></div>
<div class="t" style="left:72px;top:375px;"><span class="c">第一分类</span></div>
<div class="btn" style="left:879px;top:369px;width:82px;height:25px;"></div>
<div class="t" style="left:877px;top:374px;width:82px;text-align:center;"><span class="c">汇总条件</span></div>
<div class="btn" style="left:964px;top:369px;width:82px;height:25px;"></div>
<svg style="position:absolute;left:984px;top:373px" width="16" height="16" viewBox="0 0 16 16">
<rect x="0" y="0" width="16" height="16" fill="#2f7a2f"/>
<rect x="0.5" y="0.5" width="15" height="15" fill="none" stroke="#a8d8a8" stroke-width="1" stroke-dasharray="1 1"/>
<rect x="2" y="2" width="12" height="12" fill="#d4f6d4"/>
<path d="M3.5 3.5 L12.5 12.5 M12.5 3.5 L3.5 12.5" stroke="#2e7e2e" stroke-width="3.2"/>
<path d="M4 4 L12 12" stroke="#b8e8b8" stroke-width="0.7"/>
</svg>
<div class="t" style="left:1001px;top:375px;font-size:13px;">导出</div>
<div style="left:5px;top:407px;width:1044px;height:147px;background:#fff;border:1px solid #828282;"></div>
<div style="left:6px;top:408px;width:1042px;height:38px;background:#f0f0f0;"></div>
<div style="left:6px;top:408px;width:9px;height:38px;background:#f0f0f0;border-top:1px solid #fff;border-left:1px solid #fff;"></div>
<div style="left:15px;top:408px;width:1px;height:38px;background:#6e6e6e;"></div>
<div style="left:16px;top:408px;width:1px;height:38px;background:#fff;"></div>
<div style="left:16px;top:408px;width:67px;height:1px;background:#fff;"></div>
<div class="t" style="left:15px;top:412px;width:67px;text-align:center;"><span class="c">第一分类</span></div>
<div style="left:83px;top:408px;width:1px;height:38px;background:#6e6e6e;"></div>
<div style="left:6px;top:445px;width:1042px;height:1px;background:#fff;"></div>
<div style="left:84px;top:408px;width:211px;height:1px;background:#fff;"></div>
<div style="left:84px;top:408px;width:1px;height:38px;background:#fff;"></div>
<div class="t" style="left:84px;top:412px;width:211px;text-align:center;"><span class="c">期初结存</span></div>
<div style="left:84px;top:427px;width:211px;height:1px;background:#808080;"></div>
<div style="left:84px;top:428px;width:211px;height:1px;background:#fff;"></div>
<div class="t" style="left:84px;top:432px;width:70px;text-align:center;height:14px;"><span class="c">数量</span></div>
<div style="left:154px;top:428px;width:1px;height:18px;background:#6e6e6e;"></div>
<div style="left:155px;top:428px;width:1px;height:18px;background:#fff;"></div>
<div class="t" style="left:155px;top:432px;width:69px;text-align:center;height:14px;"><span class="c">平均单价</span></div>
<div style="left:224px;top:428px;width:1px;height:18px;background:#6e6e6e;"></div>
<div style="left:225px;top:428px;width:1px;height:18px;background:#fff;"></div>
<div class="t" style="left:225px;top:432px;width:70px;text-align:center;height:14px;"><span class="c">金额</span></div>
<div style="left:295px;top:408px;width:1px;height:38px;background:#6e6e6e;"></div>
<div style="left:296px;top:408px;width:1px;height:19px;background:#6e6e6e;"></div>
<div style="left:297px;top:408px;width:211px;height:1px;background:#fff;"></div>
<div style="left:297px;top:408px;width:1px;height:38px;background:#fff;"></div>
<div class="t" style="left:297px;top:412px;width:211px;text-align:center;"><span class="c">本期入库</span></div>
<div style="left:297px;top:427px;width:211px;height:1px;background:#808080;"></div>
<div style="left:297px;top:428px;width:211px;height:1px;background:#fff;"></div>
<div class="t" style="left:297px;top:432px;width:69px;text-align:center;height:14px;"><span class="c">数量</span></div>
<div style="left:366px;top:428px;width:1px;height:18px;background:#6e6e6e;"></div>
<div style="left:367px;top:428px;width:1px;height:18px;background:#fff;"></div>
<div class="t" style="left:367px;top:432px;width:70px;text-align:center;height:14px;"><span class="c">平均单价</span></div>
<div style="left:437px;top:428px;width:1px;height:18px;background:#6e6e6e;"></div>
<div style="left:438px;top:428px;width:1px;height:18px;background:#fff;"></div>
<div class="t" style="left:438px;top:432px;width:70px;text-align:center;height:14px;"><span class="c">金额</span></div>
<div style="left:508px;top:408px;width:1px;height:38px;background:#6e6e6e;"></div>
<div style="left:509px;top:408px;width:212px;height:1px;background:#fff;"></div>
<div style="left:509px;top:408px;width:1px;height:38px;background:#fff;"></div>
<div class="t" style="left:509px;top:412px;width:212px;text-align:center;"><span class="c">本期出库</span></div>
<div style="left:509px;top:427px;width:212px;height:1px;background:#808080;"></div>
<div style="left:509px;top:428px;width:212px;height:1px;background:#fff;"></div>
<div class="t" style="left:509px;top:432px;width:70px;text-align:center;height:14px;"><span class="c">数量</span></div>
<div style="left:579px;top:428px;width:1px;height:18px;background:#6e6e6e;"></div>
<div style="left:580px;top:428px;width:1px;height:18px;background:#fff;"></div>
<div class="t" style="left:580px;top:432px;width:70px;text-align:center;height:14px;"><span class="c">平均单价</span></div>
<div style="left:650px;top:428px;width:1px;height:18px;background:#6e6e6e;"></div>
<div style="left:651px;top:428px;width:1px;height:18px;background:#fff;"></div>
<div class="t" style="left:651px;top:432px;width:70px;text-align:center;height:14px;"><span class="c">金额</span></div>
<div style="left:721px;top:408px;width:1px;height:38px;background:#6e6e6e;"></div>
<div style="left:722px;top:408px;width:212px;height:1px;background:#fff;"></div>
<div style="left:722px;top:408px;width:1px;height:38px;background:#fff;"></div>
<div class="t" style="left:722px;top:412px;width:212px;text-align:center;"><span class="c">期末结存</span></div>
<div style="left:722px;top:427px;width:212px;height:1px;background:#808080;"></div>
<div style="left:722px;top:428px;width:212px;height:1px;background:#fff;"></div>
<div class="t" style="left:722px;top:432px;width:70px;text-align:center;height:14px;"><span class="c">数量</span></div>
<div style="left:792px;top:428px;width:1px;height:18px;background:#6e6e6e;"></div>
<div style="left:793px;top:428px;width:1px;height:18px;background:#fff;"></div>
<div class="t" style="left:793px;top:432px;width:70px;text-align:center;height:14px;"><span class="c">平均单价</span></div>
<div style="left:863px;top:428px;width:1px;height:18px;background:#6e6e6e;"></div>
<div style="left:864px;top:428px;width:1px;height:18px;background:#fff;"></div>
<div class="t" style="left:864px;top:432px;width:70px;text-align:center;height:14px;"><span class="c">金额</span></div>
<div style="left:934px;top:408px;width:1px;height:38px;background:#6e6e6e;"></div>
<div style="left:935px;top:408px;width:113px;height:1px;background:#fff;"></div>
<div style="left:6px;top:446px;width:1025px;height:1px;background:#000;"></div>
<div style="left:1031px;top:446px;width:17px;height:1px;background:#a0a0a0;"></div>
<div style="left:6px;top:447px;width:1025px;height:90px;overflow:hidden;">
<div style="left:10px;top:0px;width:1015px;height:24px;background:#e8e8fc;"></div>
<div style="left:0px;top:0px;width:9px;height:24px;background:#f0f0f0;"></div>
<div style="left:0px;top:23px;width:9px;height:1px;background:#000;"></div>
<div style="left:9px;top:0px;width:1px;height:24px;background:#000;"></div>
<div style="left:80px;top:0px;width:1px;height:24px;background:#c6c6c6;"></div>
<div class="t" style="left:81px;top:5px;width:67px;text-align:right;">126698</div>
<div style="left:151px;top:0px;width:1px;height:24px;background:#c6c6c6;"></div>
<div class="t" style="left:152px;top:5px;width:67px;text-align:right;">0</div>
<div style="left:222px;top:0px;width:1px;height:24px;background:#c6c6c6;"></div>
<div class="t" style="left:223px;top:5px;width:67px;text-align:right;">0</div>
<div style="left:293px;top:0px;width:1px;height:24px;background:#c6c6c6;"></div>
<div class="t" style="left:294px;top:5px;width:67px;text-align:right;">495751</div>
<div style="left:364px;top:0px;width:1px;height:24px;background:#c6c6c6;"></div>
<div class="t" style="left:365px;top:5px;width:67px;text-align:right;">0</div>
<div style="left:435px;top:0px;width:1px;height:24px;background:#c6c6c6;"></div>
<div class="t" style="left:436px;top:5px;width:67px;text-align:right;">6,197</div>
<div style="left:506px;top:0px;width:1px;height:24px;background:#c6c6c6;"></div>
<div class="t" style="left:507px;top:5px;width:67px;text-align:right;">227047</div>
<div style="left:577px;top:0px;width:1px;height:24px;background:#c6c6c6;"></div>
<div class="t" style="left:578px;top:5px;width:67px;text-align:right;">0</div>
<div style="left:648px;top:0px;width:1px;height:24px;background:#c6c6c6;"></div>
<div class="t" style="left:649px;top:5px;width:67px;text-align:right;">1,304</div>
<div style="left:719px;top:0px;width:1px;height:24px;background:#c6c6c6;"></div>
<div class="t" style="left:720px;top:5px;width:67px;text-align:right;">395401</div>
<div style="left:790px;top:0px;width:1px;height:24px;background:#c6c6c6;"></div>
<div class="t" style="left:791px;top:5px;width:67px;text-align:right;">0</div>
<div style="left:861px;top:0px;width:1px;height:24px;background:#c6c6c6;"></div>
<div class="t" style="left:862px;top:5px;width:67px;text-align:right;">4,892</div>
<div style="left:932px;top:0px;width:1px;height:24px;background:#c6c6c6;"></div>
<div style="left:0px;top:24px;width:9px;height:24px;background:#f0f0f0;"></div>
<div style="left:0px;top:47px;width:9px;height:1px;background:#000;"></div>
<div style="left:9px;top:24px;width:1px;height:24px;background:#000;"></div>
<div style="left:80px;top:24px;width:1px;height:24px;background:#c6c6c6;"></div>
<div class="t" style="left:81px;top:29px;width:67px;text-align:right;">126698</div>
<div style="left:151px;top:24px;width:1px;height:24px;background:#c6c6c6;"></div>
<div class="t" style="left:152px;top:29px;width:67px;text-align:right;">0</div>
<div style="left:222px;top:24px;width:1px;height:24px;background:#c6c6c6;"></div>
<div class="t" style="left:223px;top:29px;width:67px;text-align:right;">0</div>
<div style="left:293px;top:24px;width:1px;height:24px;background:#c6c6c6;"></div>
<div class="t" style="left:294px;top:29px;width:67px;text-align:right;">495751</div>
<div style="left:364px;top:24px;width:1px;height:24px;background:#c6c6c6;"></div>
<div class="t" style="left:365px;top:29px;width:67px;text-align:right;">0</div>
<div style="left:435px;top:24px;width:1px;height:24px;background:#c6c6c6;"></div>
<div class="t" style="left:436px;top:29px;width:67px;text-align:right;">6,197</div>
<div style="left:506px;top:24px;width:1px;height:24px;background:#c6c6c6;"></div>
<div class="t" style="left:507px;top:29px;width:67px;text-align:right;">227047</div>
<div style="left:577px;top:24px;width:1px;height:24px;background:#c6c6c6;"></div>
<div class="t" style="left:578px;top:29px;width:67px;text-align:right;">0</div>
<div style="left:648px;top:24px;width:1px;height:24px;background:#c6c6c6;"></div>
<div class="t" style="left:649px;top:29px;width:67px;text-align:right;">1,304</div>
<div style="left:719px;top:24px;width:1px;height:24px;background:#c6c6c6;"></div>
<div class="t" style="left:720px;top:29px;width:67px;text-align:right;">395401</div>
<div style="left:790px;top:24px;width:1px;height:24px;background:#c6c6c6;"></div>
<div class="t" style="left:791px;top:29px;width:67px;text-align:right;">0</div>
<div style="left:861px;top:24px;width:1px;height:24px;background:#c6c6c6;"></div>
<div class="t" style="left:862px;top:29px;width:67px;text-align:right;">4,892</div>
<div style="left:932px;top:24px;width:1px;height:24px;background:#c6c6c6;"></div>
<div style="left:10px;top:47px;width:1015px;height:1px;background:#c6c6c6;"></div>
<div style="left:0px;top:48px;width:9px;height:24px;background:#f0f0f0;"></div>
<div style="left:0px;top:71px;width:9px;height:1px;background:#000;"></div>
<div style="left:9px;top:48px;width:1px;height:24px;background:#000;"></div>
<div style="left:80px;top:48px;width:1px;height:24px;background:#c6c6c6;"></div>
<div style="left:151px;top:48px;width:1px;height:24px;background:#c6c6c6;"></div>
<div style="left:222px;top:48px;width:1px;height:24px;background:#c6c6c6;"></div>
<div style="left:293px;top:48px;width:1px;height:24px;background:#c6c6c6;"></div>
<div style="left:364px;top:48px;width:1px;height:24px;background:#c6c6c6;"></div>
<div style="left:435px;top:48px;width:1px;height:24px;background:#c6c6c6;"></div>
<div style="left:506px;top:48px;width:1px;height:24px;background:#c6c6c6;"></div>
<div style="left:577px;top:48px;width:1px;height:24px;background:#c6c6c6;"></div>
<div style="left:648px;top:48px;width:1px;height:24px;background:#c6c6c6;"></div>
<div style="left:719px;top:48px;width:1px;height:24px;background:#c6c6c6;"></div>
<div style="left:790px;top:48px;width:1px;height:24px;background:#c6c6c6;"></div>
<div style="left:861px;top:48px;width:1px;height:24px;background:#c6c6c6;"></div>
<div style="left:932px;top:48px;width:1px;height:24px;background:#c6c6c6;"></div>
<div style="left:10px;top:71px;width:1015px;height:1px;background:#c6c6c6;"></div>
<div style="left:0px;top:72px;width:9px;height:24px;background:#f0f0f0;"></div>
<div style="left:0px;top:95px;width:9px;height:1px;background:#000;"></div>
<div style="left:9px;top:72px;width:1px;height:24px;background:#000;"></div>
<div style="left:80px;top:72px;width:1px;height:24px;background:#c6c6c6;"></div>
<div style="left:151px;top:72px;width:1px;height:24px;background:#c6c6c6;"></div>
<div style="left:222px;top:72px;width:1px;height:24px;background:#c6c6c6;"></div>
<div style="left:293px;top:72px;width:1px;height:24px;background:#c6c6c6;"></div>
<div style="left:364px;top:72px;width:1px;height:24px;background:#c6c6c6;"></div>
<div style="left:435px;top:72px;width:1px;height:24px;background:#c6c6c6;"></div>
<div style="left:506px;top:72px;width:1px;height:24px;background:#c6c6c6;"></div>
<div style="left:577px;top:72px;width:1px;height:24px;background:#c6c6c6;"></div>
<div style="left:648px;top:72px;width:1px;height:24px;background:#c6c6c6;"></div>
<div style="left:719px;top:72px;width:1px;height:24px;background:#c6c6c6;"></div>
<div style="left:790px;top:72px;width:1px;height:24px;background:#c6c6c6;"></div>
<div style="left:861px;top:72px;width:1px;height:24px;background:#c6c6c6;"></div>
<div style="left:932px;top:72px;width:1px;height:24px;background:#c6c6c6;"></div>
<div style="left:10px;top:95px;width:1015px;height:1px;background:#c6c6c6;"></div>
<div style="left:10px;top:0px;width:1014px;height:24px;border:1px solid #4a7aa8;border-top:none;border-left:1px solid #000;box-shadow:inset -1px -1px 0 #d8f4ff;"></div>
<div style="left:10px;top:0px;width:70px;height:24px;background:#d8f4ff;border:1px solid #0f5aa8;border-top:none;"></div>
<div style="left:11px;top:4px;width:68px;height:15px;background:#0a6cd0;"></div>
<div class="t" style="left:13px;top:5px;color:#fff;"><span class="c">原材料</span></div>
<svg style="position:absolute;left:3px;top:9px" width="6" height="8" viewBox="0 0 6 8"><path d="M0.5 0 L5.5 4 L0.5 8 Z" fill="#000"/></svg>
</div>
<div style="left:6px;top:537px;width:1025px;height:16px;background:#f0f0f0;"></div>
<div style="left:7px;top:537px;width:4px;height:15px;background:#000;"></div>
<svg style="position:absolute;left:16px;top:541px" width="8" height="8" viewBox="0 0 7 7"><path d="M5.5 0.6 L1.8 3.6 L5.5 6.6" fill="none" stroke="#5a5a5a" stroke-width="2"/></svg>
<svg style="position:absolute;left:1019px;top:541px" width="8" height="8" viewBox="0 0 7 7"><path d="M1.5 0.6 L5.2 3.6 L1.5 6.6" fill="none" stroke="#5a5a5a" stroke-width="2"/></svg>
<div style="left:1031px;top:447px;width:17px;height:90px;background:#f0f0f0;"></div>
<svg style="position:absolute;left:1035px;top:453px" width="8" height="8" viewBox="0 0 7 7"><path d="M0.6 5.5 L3.6 1.8 L6.6 5.5" fill="none" stroke="#5a5a5a" stroke-width="2"/></svg>
<svg style="position:absolute;left:1035px;top:525px" width="8" height="8" viewBox="0 0 7 7"><path d="M0.6 1.5 L3.6 5.2 L6.6 1.5" fill="none" stroke="#5a5a5a" stroke-width="2"/></svg>
<div style="left:1031px;top:537px;width:17px;height:16px;background:#fff;"></div>
<div style="left:1055px;top:545px;width:2px;height:2px;background:#909090;"></div>
<div style="left:1051px;top:549px;width:2px;height:2px;background:#909090;"></div>
<div style="left:1055px;top:549px;width:2px;height:2px;background:#909090;"></div>
<div style="left:1051px;top:553px;width:2px;height:2px;background:#909090;"></div>
<div style="left:1055px;top:553px;width:2px;height:2px;background:#909090;"></div>
</body></html>
